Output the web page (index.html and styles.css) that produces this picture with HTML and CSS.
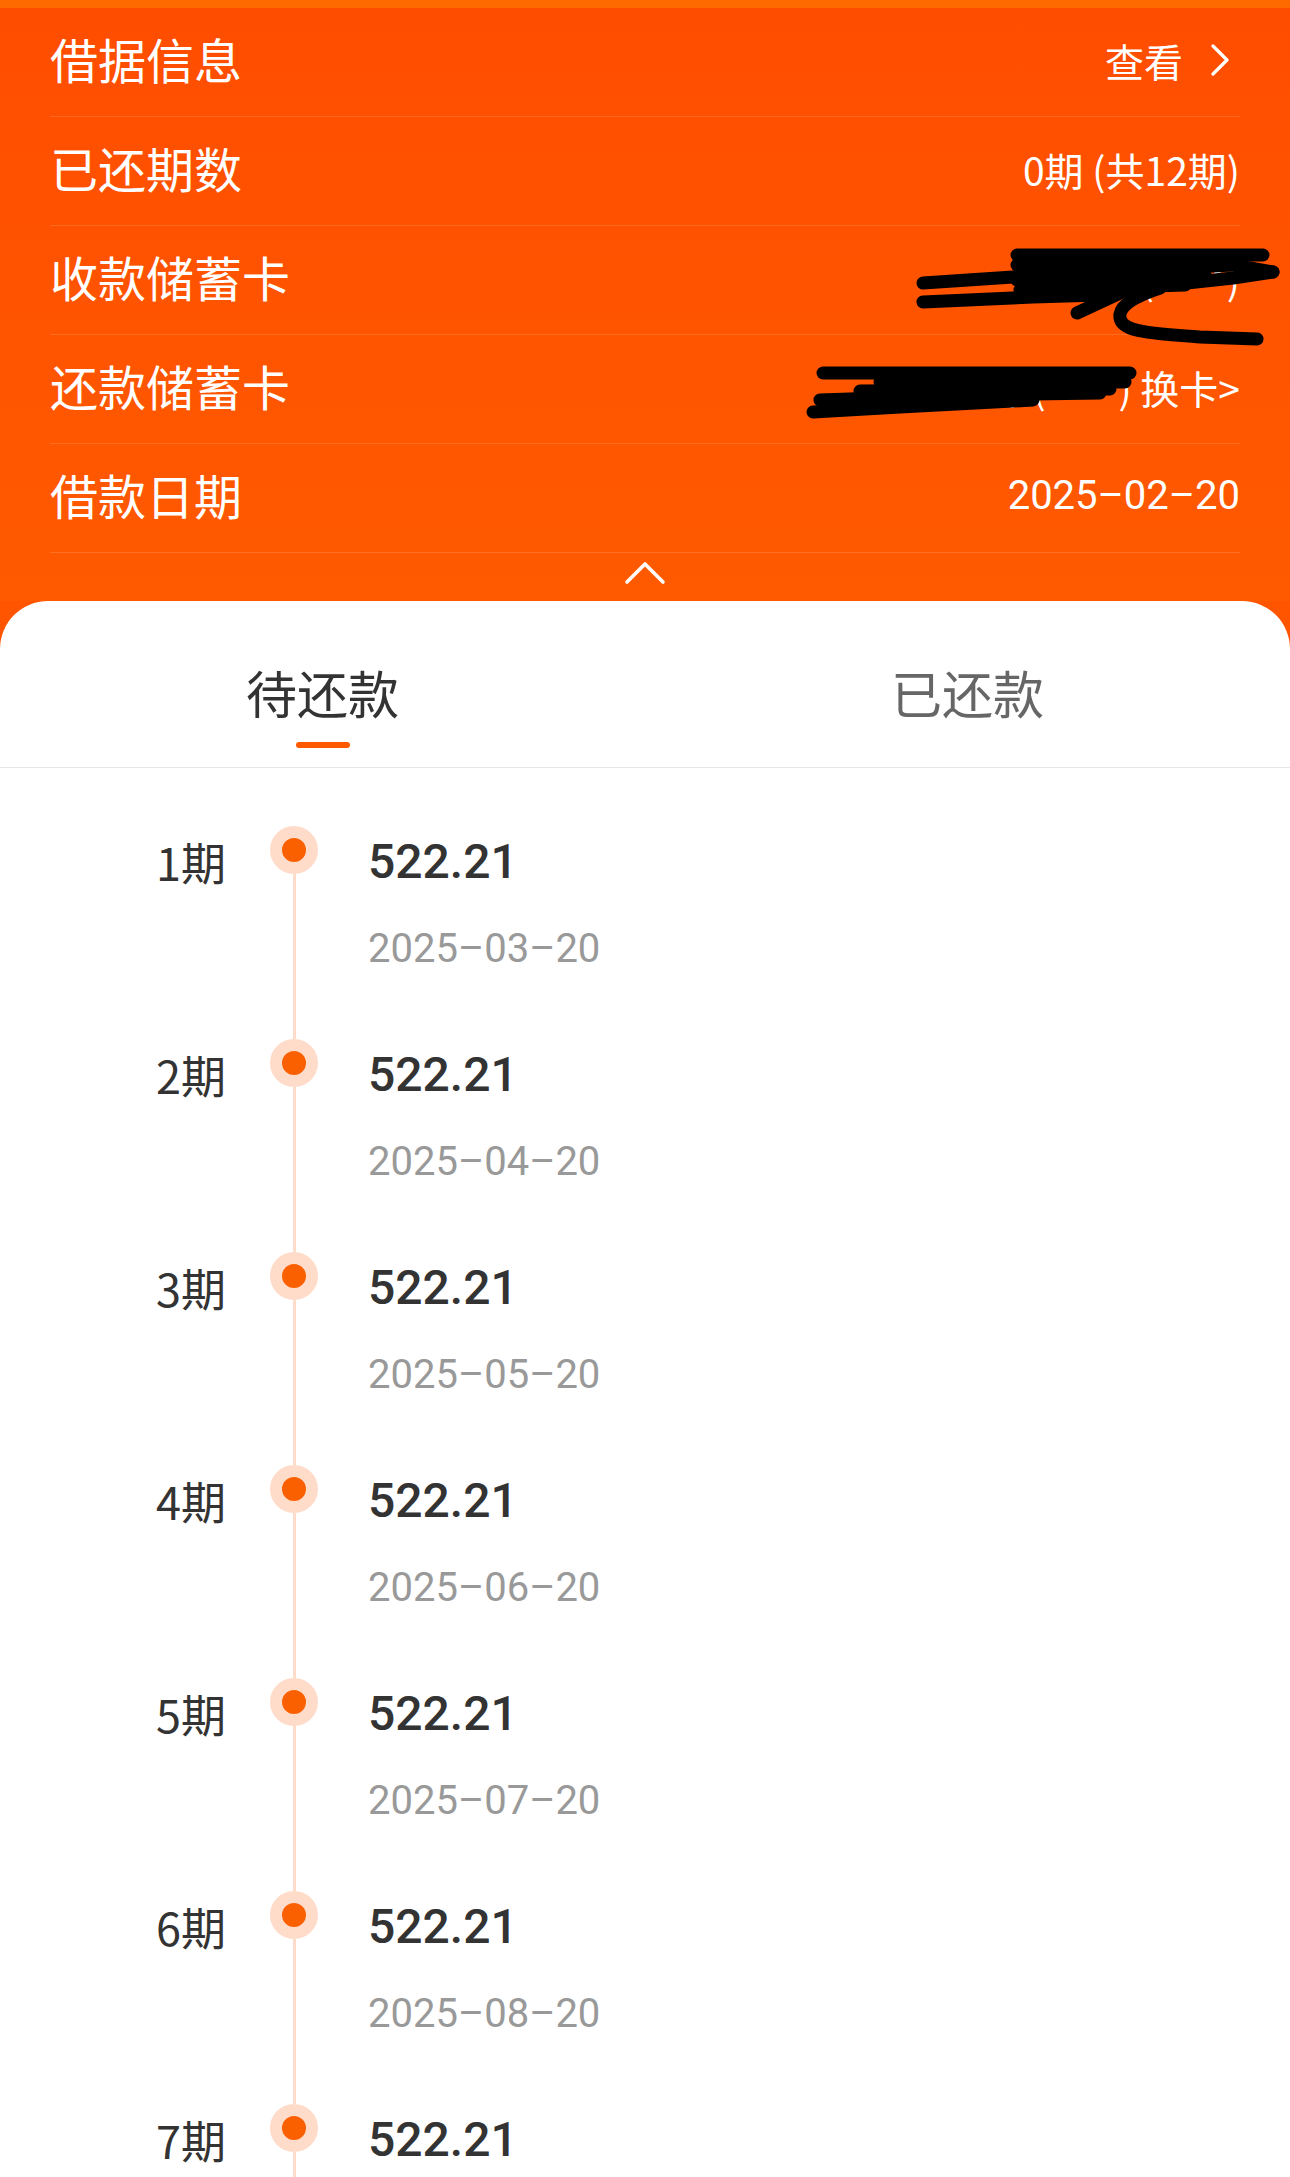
FILE: index.html
```html
<!DOCTYPE html>
<html lang="zh-CN">
<head>
<meta charset="utf-8">
<title>借据详情</title>
<link rel="stylesheet" href="styles.css">
</head>
<body>
<div class="page">
  <div class="topbar"></div>
  <section class="info">
    <div class="row">
      <span class="label">借据信息</span>
      <span class="value link">查看<svg class="chev-right" viewBox="0 0 20 32" width="20" height="32"><path d="M3 2 L17 16 L3 30" fill="none" stroke="#fff" stroke-width="3.2" stroke-linecap="round" stroke-linejoin="round"/></svg></span>
    </div>
    <div class="row">
      <span class="label">已还期数</span>
      <span class="value">0期 (共12期)</span>
    </div>
    <div class="row">
      <span class="label">收款储蓄卡</span>
      <span class="value">银行卡(****)</span>
    </div>
    <div class="row">
      <span class="label">还款储蓄卡</span>
      <span class="value">银行卡(****) 换卡&gt;</span>
    </div>
    <div class="row">
      <span class="label">借款日期</span>
      <span class="value num">2025–02–20</span>
    </div>
    <div class="collapse">
      <svg viewBox="0 0 42 24" width="42" height="24"><path d="M3 21 L21 3 L39 21" fill="none" stroke="#fff" stroke-width="3.6" stroke-linecap="round" stroke-linejoin="round"/></svg>
    </div>
    <svg class="scribble" viewBox="800 230 490 200" width="490" height="200">
      <g fill="none" stroke="#000" stroke-width="13" stroke-linecap="round" stroke-linejoin="round">
        <path d="M1017 255 L1263 255"/>
        <path d="M1017 265 L1235 262"/>
        <path d="M1017 280 L1205 275"/>
        <path d="M1020 290 L1185 285"/>
        <path d="M923 283 L1013 277 L1133 270 L1233 265 L1273 272"/>
        <path d="M923 302 L1033 297 L1100 295 L1150 287 L1233 278 L1273 272"/>
        <path d="M1077 313 L1120 293"/>
        <path d="M1160 288 C1135 296 1118 306 1120 318 C1122 330 1140 333 1200 337 L1257 339"/>
        <path d="M823 373 L1130 373"/>
        <path d="M880 382 L1125 382"/>
        <path d="M860 391 L1110 389"/>
        <path d="M820 400 L967 395 L1100 393"/>
        <path d="M813 412 L900 407 L1033 400"/>
      </g>
    </svg>
  </section>

  <section class="card">
    <div class="tabs">
      <div class="tab active"><span class="tab-text">待还款</span><span class="tab-bar"></span></div>
      <div class="tab"><span class="tab-text">已还款</span><span class="tab-bar"></span></div>
    </div>
    <ul class="timeline">
      <li class="item"><span class="period">1期</span><span class="axis"><span class="dot"></span><span class="line"></span></span><span class="content"><span class="amount">522.21</span><span class="date">2025–03–20</span></span></li>
      <li class="item"><span class="period">2期</span><span class="axis"><span class="dot"></span><span class="line"></span></span><span class="content"><span class="amount">522.21</span><span class="date">2025–04–20</span></span></li>
      <li class="item"><span class="period">3期</span><span class="axis"><span class="dot"></span><span class="line"></span></span><span class="content"><span class="amount">522.21</span><span class="date">2025–05–20</span></span></li>
      <li class="item"><span class="period">4期</span><span class="axis"><span class="dot"></span><span class="line"></span></span><span class="content"><span class="amount">522.21</span><span class="date">2025–06–20</span></span></li>
      <li class="item"><span class="period">5期</span><span class="axis"><span class="dot"></span><span class="line"></span></span><span class="content"><span class="amount">522.21</span><span class="date">2025–07–20</span></span></li>
      <li class="item"><span class="period">6期</span><span class="axis"><span class="dot"></span><span class="line"></span></span><span class="content"><span class="amount">522.21</span><span class="date">2025–08–20</span></span></li>
      <li class="item last"><span class="period">7期</span><span class="axis"><span class="dot"></span><span class="line"></span></span><span class="content"><span class="amount">522.21</span></span></li>
    </ul>
  </section>
</div>
</body>
</html>
```
FILE: styles.css
```css
html, body {
  margin: 0;
  padding: 0;
  background: #fff;
}
body {
  font-family: "Noto Sans CJK SC", "Noto Sans", sans-serif;
  -webkit-font-smoothing: antialiased;
}
.page {
  width: 1290px;
  height: 2177px;
  overflow: hidden;
  background: #ff5500;
  display: flex;
  flex-direction: column;
}
.topbar {
  height: 8px;
  flex: none;
  background: #ff6a00;
}
.info {
  position: relative;
  flex: none;
  background: linear-gradient(180deg, #ff4d00 0%, #ff5a00 100%);
}
.row {
  display: flex;
  justify-content: space-between;
  align-items: center;
  height: 100px;
  padding-bottom: 8px;
  margin: 0 50px;
  border-bottom: 1px solid rgba(255, 255, 255, 0.14);
  color: #fff;
}
.label {
  font-size: 48px;
  line-height: 48px;
  white-space: nowrap;
}
.value {
  font-size: 39px;
  line-height: 40px;
  margin-top: 4px;
  white-space: nowrap;
}
.value.link {
  display: flex;
  align-items: center;
}
.chev-right {
  margin-left: 27px;
  margin-right: 10px;
  width: 20px;
  height: 32px;
}
.num {
  font-family: Roboto, "Noto Sans CJK SC", sans-serif;
  font-size: 40px;
}
.collapse {
  height: 48px;
  display: flex;
  justify-content: center;
  align-items: flex-start;
}
.collapse svg {
  margin-top: 8px;
}
.scribble {
  position: absolute;
  left: 800px;
  top: 222px;
  overflow: visible;
}

.card {
  flex: 1;
  background: #fff;
  border-radius: 48px 48px 0 0;
}
.tabs {
  display: flex;
  height: 166px;
  border-bottom: 1px solid #e6e6e6;
}
.tab {
  flex: 1;
  display: flex;
  flex-direction: column;
  align-items: center;
  padding-top: 66px;
  color: #666;
}
.tab-text {
  font-size: 51px;
  line-height: 51px;
}
.tab-bar {
  margin-top: 24px;
  width: 54px;
  height: 6px;
  border-radius: 3px;
  background: transparent;
}
.tab.active {
  color: #333;
}
.tab.active .tab-bar {
  background: #ff5a00;
}

.timeline {
  list-style: none;
  margin: 0;
  padding: 58px 0 0;
}
.item {
  display: flex;
  height: 213px;
}
.item.last {
  height: 260px;
}
.period {
  width: 226px;
  text-align: right;
  font-size: 45px;
  line-height: 45px;
  margin-top: 13px;
  color: #333;
}
.axis {
  width: 48px;
  margin-left: 44px;
  display: flex;
  flex-direction: column;
  align-items: center;
}
.dot {
  box-sizing: border-box;
  width: 48px;
  height: 48px;
  border-radius: 50%;
  border: 12px solid #ffdcca;
  background: #fa6000;
  flex: none;
}
.line {
  flex: 1;
  width: 3px;
  background: #ffdcca;
}
.content {
  margin-left: 50px;
  display: flex;
  flex-direction: column;
  align-items: flex-start;
}
.amount {
  font-family: Roboto, "Noto Sans", sans-serif;
  font-weight: 500;
  font-size: 48px;
  line-height: 48px;
  margin-top: 12px;
  color: #333;
}
.date {
  font-family: Roboto, "Noto Sans", sans-serif;
  font-size: 40px;
  line-height: 40px;
  margin-top: 43px;
  color: #999;
}
```
